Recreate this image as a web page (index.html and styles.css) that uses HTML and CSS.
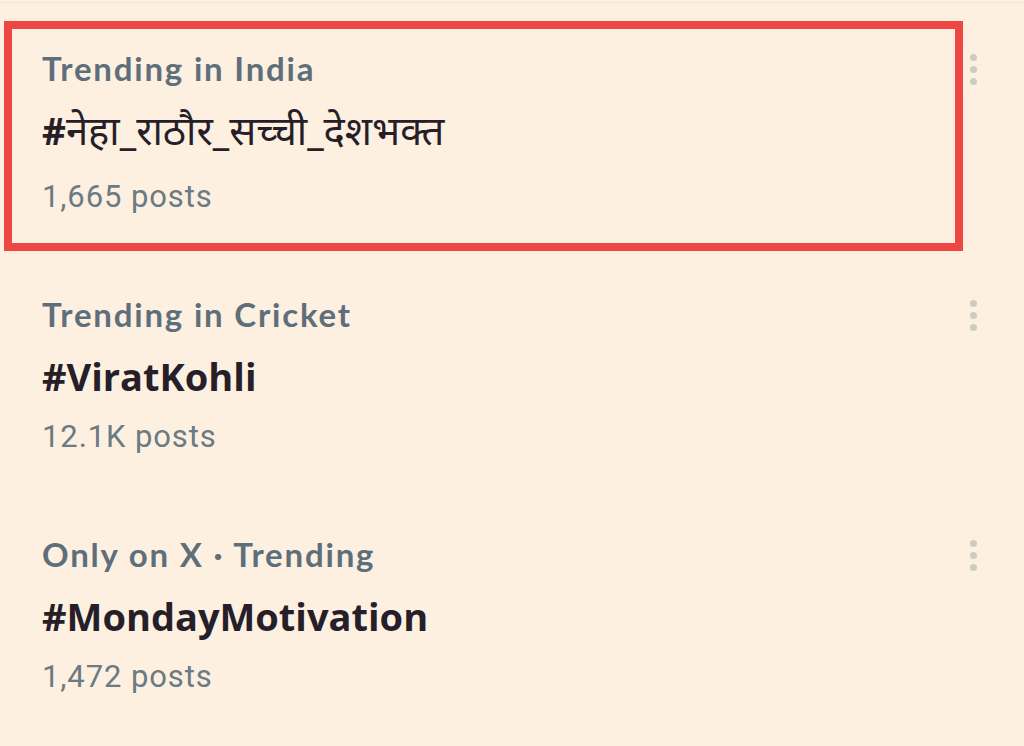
FILE: index.html
```html
<!DOCTYPE html>
<html lang="en">
<head>
<meta charset="utf-8">
<title>Trends</title>
<link rel="stylesheet" href="styles.css">
</head>
<body>
<div class="page">
  <div class="topline"></div>
  <ul class="trends">
    <li class="trend">
      <div class="trend-main highlight">
        <div class="trend-meta">Trending in India</div>
        <div class="trend-tag hindi"><span class="hash">#</span>नेहा_राठौर_सच्ची_देशभक्त</div>
        <div class="trend-count">1,665 posts</div>
      </div>
      <div class="kebab"><span></span><span></span><span></span></div>
    </li>
    <li class="trend">
      <div class="trend-main">
        <div class="trend-meta">Trending in Cricket</div>
        <div class="trend-tag">#ViratKohli</div>
        <div class="trend-count">12.1K posts</div>
      </div>
      <div class="kebab"><span></span><span></span><span></span></div>
    </li>
    <li class="trend">
      <div class="trend-main">
        <div class="trend-meta">Only on X · Trending</div>
        <div class="trend-tag">#MondayMotivation</div>
        <div class="trend-count">1,472 posts</div>
      </div>
      <div class="kebab"><span></span><span></span><span></span></div>
    </li>
  </ul>
</div>
</body>
</html>
```
FILE: styles.css
```css
html, body {
  margin: 0;
  padding: 0;
  background: #fdf0e1;
}

.page {
  width: 1024px;
  height: 746px;
  overflow: hidden;
  background: #fdf0e1;
  font-family: "Lato", "Noto Sans", sans-serif;
}

.topline {
  height: 1px;
  margin-top: 2px;
  background: #f3e5d6;
}

.trends {
  list-style: none;
  margin: 0;
  padding: 18px 0 0 4px;
  display: flex;
  flex-direction: column;
  gap: 16px;
}

.trend {
  display: flex;
  align-items: flex-start;
  padding-right: 47px;
}

.trend-main {
  flex: 1;
  border: 8px solid transparent;
  padding: 21px 30px 28px 30px;
  display: flex;
  flex-direction: column;
}

.trend-main.highlight {
  border-color: #ee4545;
}

.trend-meta {
  font-family: "Lato", sans-serif;
  font-weight: 700;
  font-size: 33px;
  letter-spacing: 1.8px;
  line-height: 36px;
  color: #5e6f7b;
}

.trend-tag {
  margin-top: 21px;
  font-family: "Open Sans", sans-serif;
  font-weight: 700;
  font-size: 38px;
  line-height: 46px;
  color: #261f29;
}

.trend-tag.hindi {
  font-family: "Noto Sans Devanagari", "Lohit Devanagari", "FreeSans", "Noto Sans", sans-serif;
  font-weight: 400;
  font-size: 40px;
  line-height: 47px;
}

.trend-tag .hash {
  font-family: "Open Sans", sans-serif;
  font-weight: 700;
  font-size: 37px;
}

.trend-count {
  margin-top: 20px;
  font-family: "Roboto", sans-serif;
  font-weight: 400;
  font-size: 31px;
  letter-spacing: 0.9px;
  line-height: 36px;
  color: #6c7a81;
}

.kebab {
  margin-left: 7px;
  padding-top: 33px;
  display: flex;
  flex-direction: column;
  gap: 5px;
}

.kebab span {
  width: 7px;
  height: 7px;
  border-radius: 50%;
  background: #ccccc1;
}
```
